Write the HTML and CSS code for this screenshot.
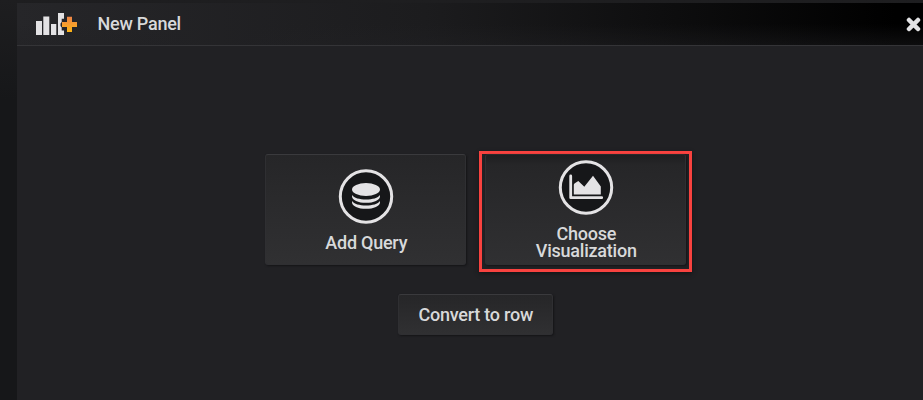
FILE: index.html
```html
<!DOCTYPE html>
<html lang="en">
<head>
<meta charset="utf-8">
<title>New Panel</title>
<link rel="stylesheet" href="styles.css">
</head>
<body>
<section class="panel">
  <header class="panel-header">
    <svg class="panel-icon" width="42" height="24" viewBox="0 0 42 24">
      <defs>
        <linearGradient id="plus" x1="0" y1="0" x2="0" y2="1">
          <stop offset="0" stop-color="#ee8448"/>
          <stop offset="1" stop-color="#fdb515"/>
        </linearGradient>
      </defs>
      <path fill="#e3e2e4" d="M0 9h6v14H0zM7.300 4.500h6V23h-6zM15 12h5.300v11H15zM22 1h6v5.800h-2.300v3.200L24.500 11.500v2.500l1.200 1.500V18.500H28V23h-6z"/>
      <path fill="url(#plus)" d="M31 4.700h5v5.300h5v5h-5v5h-5v-5h-5v-5h5z"/>
    </svg>
    <h1 class="panel-title">New Panel</h1>
    <button class="close" aria-label="Close">
      <svg width="15" height="15" viewBox="0 0 15 15"><path d="M3 3l9 9M12 3l-9 9" stroke="#e3e3e5" stroke-width="4.500" stroke-linecap="round"/></svg>
    </button>
  </header>
  <main class="panel-body">
    <div class="choices">
      <button class="btn choice add-query">
        <svg class="choice-icon" width="56" height="56" viewBox="0 0 56 56">
          <circle cx="28" cy="28.500" r="25.700" fill="#161719" stroke="#e4e3e5" stroke-width="3"/>
          <g fill="#e4e3e5">
            <ellipse cx="28" cy="21.500" rx="14" ry="6.500"/>
            <path d="M14 27c2 3 7.500 4.500 14 4.500S40 30 42 27v1.200c0 4-6.300 6.600-14 6.600s-14-2.600-14-6.600z"/>
            <path d="M14 33c2 3 7.500 4.500 14 4.500S40 36 42 33v1.200c0 4-6.300 6.600-14 6.600s-14-2.600-14-6.600z"/>
          </g>
        </svg>
        <span>Add Query</span>
      </button>
      <div class="highlight">
        <button class="btn choice">
          <svg class="choice-icon" width="56" height="56" viewBox="0 0 56 56">
            <circle cx="28" cy="28.500" r="25.700" fill="#161719" stroke="#e4e3e5" stroke-width="3"/>
            <path d="M12.700 17v21.700h31" fill="none" stroke="#e4e3e5" stroke-width="2.800" stroke-linecap="round" stroke-linejoin="round"/>
            <path d="M15.800 25.800q0-1 1-1.500l3.500-2.300 6 5.700L35 16.800l7.800 10.700V35.500H15.800z" fill="#e4e3e5"/>
          </svg>
          <span>Choose<br>Visualization</span>
        </button>
      </div>
    </div>
    <button class="btn convert">Convert to row</button>
  </main>
</section>
</body>
</html>
```
FILE: styles.css
```css
* {
  box-sizing: border-box;
}

body {
  margin: 0;
  height: 400px;
  padding: 3px 0 0 17px;
  overflow: hidden;
  background: linear-gradient(#1e1e20 0, #161719 100px);
  font-family: Roboto, "Liberation Sans", sans-serif;
  font-size: 18px;
  font-weight: 500;
  letter-spacing: -0.24px;
  color: #d8d9da;
}

.panel {
  height: 397px;
  background: #212124;
}

.panel-header {
  display: flex;
  align-items: center;
  height: 43px;
  padding: 0 2px 0 19px;
  border-bottom: 1px solid #343437;
  background:
    linear-gradient(transparent 50%, rgba(33, 33, 36, 0.4)),
    linear-gradient(90deg, #262629, #1c1c1e 45%, #000 97%);
}

.panel-title {
  flex: 1;
  margin: 0 0 2px 19.5px;
  font-size: 18px;
  font-weight: 500;
}

.panel-icon,
.choice-icon {
  display: block;
}

.close {
  display: flex;
  padding: 0;
  border: 0;
  background: none;
}

.panel-body {
  display: flex;
  flex-direction: column;
  align-items: center;
  padding: 105px 0 0;
}

.choices {
  display: flex;
  align-items: flex-start;
  gap: 13px;
  margin-left: 17px;
}

.highlight {
  display: flex;
  padding: 0 3px 4px;
  border: 3px solid #f8423f;
  box-shadow: 0 2px 4px #151517;
}

.btn {
  padding: 0;
  border: 1px solid #2f2f32;
  border-top-color: #3a3a3d;
  border-radius: 3px;
  background: linear-gradient(#262628, #303032);
  box-shadow: 1px 1px 2px #151517;
  font: inherit;
  letter-spacing: inherit;
  color: inherit;
}

.choice {
  display: flex;
  flex-direction: column;
  align-items: center;
  justify-content: center;
  gap: 10px;
  width: 201px;
  height: 111px;
  line-height: 17px;
}

.choice span {
  padding-left: 1.5px;
}

.add-query {
  margin-top: 3px;
}

.highlight .choice {
  padding-bottom: 1px;
  border-top-color: #29292b;
  background: linear-gradient(#1e1e20, #262628 10px, #303032);
}

.convert {
  width: 155px;
  height: 41px;
  margin: 22px 0 0 10px;
  padding-left: 1.5px;
}
```
